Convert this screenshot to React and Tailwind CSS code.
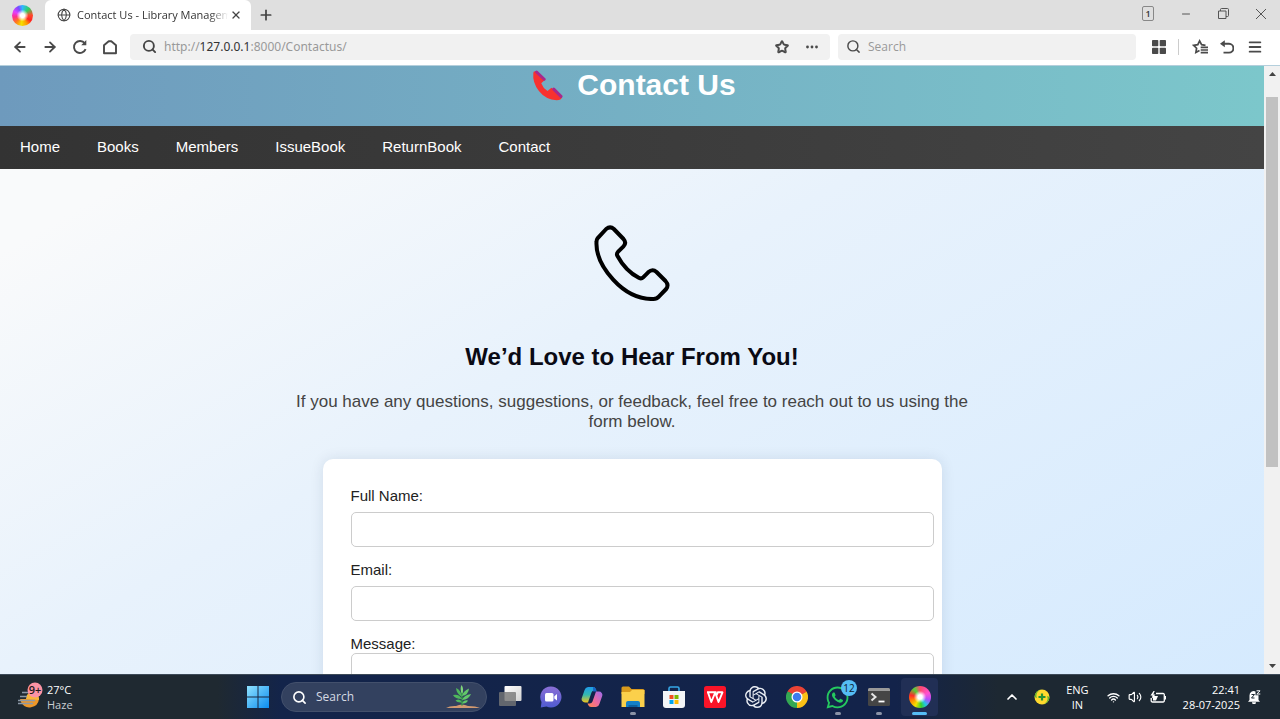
import React from "react";
import { ArrowLeft, ArrowRight, Globe, Search, Star, Plus, X, Minus, Menu, ChevronUp, Wifi, Volume2 } from "lucide-react";
import { SiOpenai } from "react-icons/si";
import { FaWhatsapp } from "react-icons/fa";

const WHEEL =
  "rounded-full bg-[radial-gradient(circle,#ffffff_14%,rgba(255,255,255,0)_40%),conic-gradient(#2fb8ff,#2fd060_12%,#ff4a2a_24%,#ff2222_34%,#ff9a00_42%,#f4e000_52%,#ff7a1a_62%,#ff2e8a_72%,#e040ff_82%,#7a4bff_92%,#2fb8ff)]";

const WHEEL_ALT =
  "rounded-full bg-[radial-gradient(circle,#ffffff_14%,rgba(255,255,255,0)_40%),conic-gradient(#ff4a6a,#ff4fd0_18%,#b04dff_30%,#20c8e0_40%,#35d02f_48%,#f4e000_58%,#ff8a00_68%,#ff2a2a_78%,#4fd23a_90%,#ff4a6a)]";

function TitleBar() {
  return (
    <div className="flex h-[30px] shrink-0 bg-[#dfdfdf]">
      <button aria-label="Browser menu" className="flex w-[45px] items-center justify-center">
        <span className={`size-[21px] ${WHEEL}`} />
      </button>
      <div className="flex w-[206px] items-center rounded-t-md bg-white pl-3 pr-[7px]">
        <Globe className="size-[14px] shrink-0 text-[#444]" strokeWidth={1.8} />
        <span className="ml-[6px] min-w-0 flex-1 overflow-hidden whitespace-nowrap text-[11px] text-[#333] [mask-image:linear-gradient(to_right,black_88%,transparent)]">
          Contact Us - Library Management
        </span>
        <button aria-label="Close tab" className="flex size-4 items-center justify-center">
          <X className="size-3 text-[#444]" strokeWidth={2.6} />
        </button>
      </div>
      <button aria-label="New tab" className="flex w-[30px] items-center justify-center">
        <Plus className="size-4 text-[#444]" strokeWidth={2.6} />
      </button>
      <div className="ml-auto flex items-center pb-[3px] pr-[14px] text-[#555]">
        <button aria-label="Tab count" className="mr-[26px] flex h-[15px] w-3 items-center justify-center rounded-xs border border-[#888] text-[9px] font-semibold text-[#333]">
          1
        </button>
        <button aria-label="Minimize" className="mr-[26px]">
          <Minus className="size-3" strokeWidth={2} />
        </button>
        <button aria-label="Restore" className="mr-[27px]">
          <svg className="size-[11px]" viewBox="0 0 11 11" fill="none" stroke="currentColor">
            <path d="M0.5 3h7.500v7.500H0.500zM2.500 3V1.500a1 1 0 0 1 1-1h6a1 1 0 0 1 1 1v6a1 1 0 0 1-1 1h-1.500" />
          </svg>
        </button>
        <button aria-label="Close window">
          <svg className="size-[10px]" viewBox="0 0 10 10" fill="none" stroke="currentColor">
            <path d="M0 0l10 10M10 0L0 10" />
          </svg>
        </button>
      </div>
    </div>
  );
}

function ToolBar() {
  return (
    <div className="flex h-9 shrink-0 items-center border-b border-[#b4cfdc] bg-white pb-[2px] text-[#4a4a4a]">
      <div className="flex w-[130px] items-center gap-[14px] pl-3">
        <button aria-label="Back"><ArrowLeft className="size-4" strokeWidth={2.7} /></button>
        <button aria-label="Forward"><ArrowRight className="size-4" strokeWidth={2.7} /></button>
        <button aria-label="Reload">
          <svg className="size-4" viewBox="0 0 16 16" fill="none" stroke="currentColor" strokeWidth="1.900">
            <path d="M13.600 10.200a6 6 0 1 1-.8-5.800" />
            <path d="M14.300 1v5.200H9.200z" fill="currentColor" stroke="none" />
          </svg>
        </button>
        <button aria-label="Home">
          <svg className="size-4" viewBox="0 0 16 16" fill="none" stroke="currentColor" strokeWidth="1.900" strokeLinejoin="round">
            <path d="M2 6.200L6.700 2.200h2.600L14 6.200v8H2z" />
          </svg>
        </button>
      </div>
      <div className="flex h-[26px] flex-[676] items-center rounded-sm bg-[#f1f1f1] px-3">
        <Search className="size-[15px] text-[#444]" strokeWidth={3} />
        <a href="http://127.0.0.1:8000/Contactus/" className="ml-[7px] font-['Noto_Sans',sans-serif] text-[12px] text-[#999]">
          http://<span className="text-[#333]">127.0.0.1</span>:8000/Contactus/
        </a>
        <button aria-label="Bookmark" className="ml-auto"><Star className="size-[14px]" strokeWidth={3.4} /></button>
        <button aria-label="More" className="ml-[17px]">
          <svg className="size-3" viewBox="0 0 12 12" fill="currentColor">
            <circle cx="1.500" cy="6" r="1.400" /><circle cx="6" cy="6" r="1.400" /><circle cx="10.500" cy="6" r="1.400" />
          </svg>
        </button>
      </div>
      <label className="ml-2 flex h-[26px] flex-[290] items-center rounded-sm bg-[#f1f1f1] pl-2">
        <Search className="size-[15px] shrink-0" strokeWidth={2.3} />
        <input aria-label="Search" placeholder="Search" className="ml-[7px] w-full min-w-0 bg-transparent text-[12px] outline-none placeholder:text-[#999]" />
      </label>
      <div className="flex w-[144px] items-center pl-4">
        <button aria-label="Apps">
          <svg className="size-[14px]" viewBox="0 0 14 14" fill="currentColor">
            <rect width="6.300" height="6.300" rx="0.800" /><rect x="7.700" width="6.300" height="6.300" rx="0.800" />
            <rect y="7.700" width="6.300" height="6.300" rx="0.800" /><rect x="7.700" y="7.700" width="6.300" height="6.300" rx="0.800" />
          </svg>
        </button>
        <span className="ml-3 h-4 w-px bg-[#ccc]" />
        <button aria-label="Favorites" className="ml-[13px]">
          <svg className="size-4" viewBox="0 0 16 16" fill="none" stroke="currentColor" strokeWidth="1.700">
            <path d="M13.500 6.300L9.600 5.700 7.600 1.900 5.800 5.700l-4.200.6 3 2.900-.7 4.300 3.600-2" />
            <path d="M8.700 8.300H16M8.700 11H16M8.700 13.700H16" />
          </svg>
        </button>
        <button aria-label="Undo close tab" className="ml-3">
          <svg className="size-[14px]" viewBox="0 0 14 14" fill="none" stroke="currentColor" strokeWidth="1.900">
            <path d="M2 3.800h7a4.200 4.200 0 0 1 0 8.800H3.500" /><path d="M4.800.3L0 3.800l4.800 3.400z" fill="currentColor" stroke="none" />
          </svg>
        </button>
        <button aria-label="Menu" className="ml-[13px]"><Menu className="size-4" strokeWidth={2.8} /></button>
      </div>
    </div>
  );
}

function PageHeader() {
  return (
    <header className="flex h-[60px] items-start justify-center gap-[14px] bg-linear-to-r from-[#6e9abd] to-[#7cc7cb] pl-1 pt-[2px]">
      <svg className="mt-[2px] size-[31px]" viewBox="100 28 92 94" aria-hidden="true">
        <path d="M103 38Q102 30 112 32L138 58L127 68Q132 82 146 92L158 82L190 110Q188 120 174 120Q140 118 120 92Q100 66 103 38Z" fill="#f8312f" />
        <path d="M113 34l23 22M165 86l22 22" stroke="#a8288c" strokeWidth="9" strokeLinecap="round" />
      </svg>
      <h1 className="text-[30px] leading-[34px] font-bold text-white">Contact Us</h1>
    </header>
  );
}

const LINKS = ["Home", "Books", "Members", "IssueBook", "ReturnBook", "Contact"];

function PageNav() {
  return (
    <nav className="flex h-[43px] items-center gap-[37px] bg-linear-to-r from-[#333] to-[#444] pl-5 text-[15px] text-white">
      {LINKS.map((l) => (
        <a key={l} href="#">{l}</a>
      ))}
    </nav>
  );
}

const FIELD = "block w-[calc(100%+20px)] rounded-[5px] border border-[#ccc] bg-white px-2 outline-none";

function ContactPage() {
  return (
    <div className="flex min-h-0 flex-1">
      <div className="min-w-0 flex-1 overflow-hidden bg-[linear-gradient(150deg,#f9fafb_14%,#e8f2fc_45%,#d5eafe)] font-['Liberation_Sans',Arial,sans-serif]">
        <PageHeader />
        <PageNav />
        <main className="flex flex-col items-center pt-14">
          <svg className="size-[76px]" viewBox="104 44 227 228" fill="none" stroke="#000" strokeWidth="12" strokeLinejoin="round" aria-hidden="true">
            <path d="M114 84L140 56Q152 46 163 56L192 86Q202 98 192 108L176 124Q170 130 174 137Q198 182 239 203Q246 206 251 201L266 186Q279 174 291 185L318 212Q329 224 320 236L298 259Q292 266 282 266Q216 268 161 208Q108 150 111 94Q111 88 114 84Z" />
          </svg>
          <h2 className="mt-[42px] text-[24px] leading-7 font-bold text-[#0a0a14]">We’d Love to Hear From You!</h2>
          <p className="mt-[21px] w-[675px] max-w-full text-center text-[17px] leading-5 text-[#444]">
            If you have any questions, suggestions, or feedback, feel free to reach out to us using the form below.
          </p>
          <form className="mt-[27px] w-[619px] max-w-full rounded-[10px] bg-white p-7 text-[15px] leading-[18px] text-[#222] shadow-[0_0_14px_rgba(0,40,70,0.1)]">
            <label htmlFor="name" className="block">Full Name:</label>
            <input id="name" type="text" className={`mt-[7px] h-[35px] ${FIELD}`} />
            <label htmlFor="email" className="mt-[14px] block">Email:</label>
            <input id="email" type="email" className={`mt-[7px] h-[35px] ${FIELD}`} />
            <label htmlFor="message" className="mt-[14px] block">Message:</label>
            <textarea id="message" rows={5} className={`resize-none ${FIELD}`} />
          </form>
        </main>
      </div>
      <div className="flex w-4 shrink-0 flex-col items-center bg-[#f1f1f1] py-[6px]">
        <svg className="h-1 w-[7px]" viewBox="0 0 7 4"><path d="M0 4L3.500 0 7 4z" fill="#444" /></svg>
        <div className="mt-[21px] h-[370px] w-3 bg-[#c1c1c1]" />
        <svg className="mt-auto h-1 w-[7px]" viewBox="0 0 7 4"><path d="M0 0h7L3.500 4z" fill="#444" /></svg>
      </div>
    </div>
  );
}

function WindowsIcon() {
  return (
    <svg className="size-[22px]" viewBox="0 0 22 22">
      <defs>
        <linearGradient id="win" x1="0" y1="0" x2="1" y2="1"><stop stopColor="#8fe2ff" /><stop offset="1" stopColor="#0b8cf0" /></linearGradient>
      </defs>
      <path d="M0 0h10.500v10.500H0zM11.500 0H22v10.500H11.500zM0 11.500h10.500V22H0zM11.500 11.500H22V22H11.500z" fill="url(#win)" />
    </svg>
  );
}

function PlantIcon() {
  return (
    <svg className="h-6 w-[34px]" viewBox="0 0 34 24">
      <path d="M0 23Q4 20.600 10 21Q16 18 22 21Q30 21 34 23z" fill="#d39a70" />
      <path d="M16 20.500V6" stroke="#2f8f46" strokeWidth="1.500" />
      <path d="M16 9Q13.500 4 15.500 0Q18.500 4 16 9z" fill="#7fd67a" />
      <path d="M16 12Q10.500 9 10 3Q15 5 16 12zM16 14Q9 14 7 10Q13 8.500 16 14zM16 17.500Q11 18 9.500 15.500Q14 13 16 17.500z" fill="#4fb85c" />
      <path d="M16 11Q17 6 23 3.500Q22.500 10 16 11zM16 15Q18 10 25 9Q23 14.500 16 15zM16 18.500Q18 14.500 22 15.500Q20.500 19 16 18.500z" fill="#62c76a" />
    </svg>
  );
}

function TaskViewIcon() {
  return (
    <svg className="size-6" viewBox="0 0 24 24">
      <defs><linearGradient id="tv" x1="0" y1="0" x2="1" y2="1"><stop stopColor="#fff" /><stop offset="1" stopColor="#d2d2d2" /></linearGradient></defs>
      <rect x="6.500" y="1" width="17" height="15" rx="1" fill="url(#tv)" />
      <rect x="1" y="7" width="17" height="14" rx="1" fill="#777" fillOpacity="0.8" />
    </svg>
  );
}

function ChatIcon() {
  return (
    <svg className="size-[22px]" viewBox="0 0 22 22">
      <defs><linearGradient id="chat" x1="0" y1="0" x2="0" y2="1"><stop stopColor="#8b6fd6" /><stop offset="1" stopColor="#4f5bd0" /></linearGradient></defs>
      <path d="M11 .5A10.500 10.500 0 1 1 6.500 20.500L.8 21.500 1.500 16A10.500 10.500 0 0 1 11 .5z" fill="url(#chat)" />
      <rect x="5" y="7" width="8.500" height="8.500" rx="1.500" fill="#fff" />
      <path d="M14.300 10.200L17 8v6.500l-2.700-2z" fill="#fff" />
    </svg>
  );
}

function CopilotIcon() {
  return (
    <svg className="size-[22px]" viewBox="0 0 22 22">
      <defs>
        <linearGradient id="cpa" x1="0" y1="0" x2="0" y2="1"><stop stopColor="#1f9bea" /><stop offset="0.5" stopColor="#33b8b0" /><stop offset="1" stopColor="#f0c41c" /></linearGradient>
        <linearGradient id="cpb" x1="1" y1="0" x2="0" y2="1"><stop stopColor="#9b6cf0" /><stop offset="0.55" stopColor="#ee6a9c" /><stop offset="1" stopColor="#ff8a48" /></linearGradient>
      </defs>
      <path d="M15.500 4.500L14.800 3A3 3 0 0 0 12 1H7A4 4 0 0 0 3.600 4L.8 12A3.400 3.400 0 0 0 4 16.500h3L10.500 6.500A3 3 0 0 1 13.300 4.500z" fill="url(#cpa)" />
      <path d="M12 1a3 3 0 0 1 2.800 2l.9 2.400h-3.500z" fill="#1763c6" />
      <path d="M6.500 17.500L7.200 19A3 3 0 0 0 10 21h5a4 4 0 0 0 3.400-3l2.800-8A3.400 3.400 0 0 0 18 5.500h-3l-3.500 10a3 3 0 0 1-2.800 2z" fill="url(#cpb)" />
    </svg>
  );
}

function FolderIcon() {
  return (
    <svg className="h-[22px] w-6" viewBox="0 0 24 22">
      <path d="M.5 2A1.500 1.500 0 0 1 2 .5h6L10.500 3H22A1.500 1.500 0 0 1 23.500 4.500V8H.5z" fill="#d99a1c" />
      <path d="M.5 6h8.500L11 4h12.500v17H.5z" fill="#fbd04b" />
      <path d="M5 21v-4a2 2 0 0 1 2-2h10a2 2 0 0 1 2 2v4z" fill="#1580c8" />
      <path d="M7.500 19h9v2h-9z" fill="#0d5f9e" />
    </svg>
  );
}

function StoreIcon() {
  return (
    <svg className="size-[22px]" viewBox="0 0 22 22">
      <path d="M6 6V2.500A1.500 1.500 0 0 1 7.500 1h7A1.500 1.500 0 0 1 16 2.500V6" fill="none" stroke="#36a7e6" strokeWidth="1.600" />
      <path d="M0 5h22v14a3 3 0 0 1-3 3H3a3 3 0 0 1-3-3z" fill="#f3f5f7" />
      <path d="M6.500 9h4v4h-4z" fill="#f25022" /><path d="M11.500 9h4v4h-4z" fill="#7fba00" />
      <path d="M6.500 14h4v4h-4z" fill="#00a4ef" /><path d="M11.500 14h4v4h-4z" fill="#ffb900" />
    </svg>
  );
}

function OfficeIcon() {
  return (
    <svg className="size-[22px]" viewBox="0 0 22 22">
      <rect width="22" height="22" rx="2.500" fill="#fa1428" />
      <path d="M3 6.300h9.500M4 6.500l3.300 9.500 3.900-9.500 3.300 9.500 4-9.700h-4.700l-1.300 3" fill="none" stroke="#fff" strokeWidth="1.900" strokeLinejoin="round" />
    </svg>
  );
}

function ChromeIcon() {
  return (
    <svg className="size-[22px]" viewBox="0 0 48 48">
      <path d="M24 24L3.200 12A24 24 0 0 1 44.800 12z" fill="#ea4335" />
      <path d="M24 24L44.800 12A24 24 0 0 1 24 48z" fill="#fbc116" />
      <path d="M24 24V48A24 24 0 0 1 3.200 12z" fill="#34a853" />
      <path d="M24 12h20.800L34.400 18z" fill="#ea4335" />
      <path d="M34.400 30L24 48 24 34z" fill="#fbc116" />
      <path d="M13.600 30L3.200 12l12 6z" fill="#34a853" />
      <circle cx="24" cy="24" r="12" fill="#fff" /><circle cx="24" cy="24" r="9.300" fill="#3b7cf0" />
    </svg>
  );
}

function TerminalIcon() {
  return (
    <svg className="h-[18px] w-[22px]" viewBox="0 0 22 18">
      <rect width="22" height="18" rx="1.500" fill="#454545" /><path d="M0 1.500A1.500 1.500 0 0 1 1.500 0h19A1.500 1.500 0 0 1 22 1.500V3H0z" fill="#999" />
      <path d="M3.500 5.500l4 3.500-4 3.500" fill="none" stroke="#e5e5e5" strokeWidth="2" /><path d="M10.500 13.500h6" stroke="#fff" strokeWidth="1.800" />
    </svg>
  );
}

const APPS = [
  { name: "Task view", icon: <TaskViewIcon /> },
  { name: "Chat", icon: <ChatIcon /> },
  { name: "Copilot", icon: <CopilotIcon /> },
  { name: "File Explorer", icon: <FolderIcon />, open: true },
  { name: "Store", icon: <StoreIcon /> },
  { name: "Office", icon: <OfficeIcon /> },
  { name: "ChatGPT", icon: <SiOpenai className="size-[22px] text-[#e8ecf2]" /> },
  { name: "Chrome", icon: <ChromeIcon /> },
  { name: "WhatsApp", icon: <FaWhatsapp className="size-[25px] text-[#25c95f]" />, open: true, badge: "12" },
  { name: "Terminal", icon: <TerminalIcon />, open: true },
  { name: "Browser", icon: <span className={`size-[22px] ${WHEEL_ALT}`} />, active: true },
];

function TaskBar() {
  return (
    <div className="flex h-[45px] shrink-0 items-center border-t border-[#3d4a58] bg-[linear-gradient(to_right,#1f2931_17%,#13244a_22%,#13234a_70%,#1d2832_78%)] text-white">
      <button className="flex w-[237px] items-center gap-1 pl-[17px] text-left">
        <svg className="h-[30px] w-[26px]" viewBox="0 0 26 30" aria-hidden="true">
          <path d="M3 17h19a9.500 9.500 0 0 1-18 3z" fill="#ee9728" /><path d="M9 17a6.500 6.500 0 0 1 13-1v2z" fill="#f8b53a" />
          <path d="M5 10.500h7M3 14.500h7M1 18.500h17M1 21.500h15" stroke="#8b98a6" strokeWidth="1.300" />
          <circle cx="18" cy="8" r="7.500" fill="#fb93a4" />
          <text x="18" y="12" textAnchor="middle" fontSize="11" fontWeight="600" fill="#1b1b1b">9+</text>
        </svg>
        <span className="flex flex-col text-[11px] leading-[15px]">
          <span>27°C</span><span className="text-[#c9ced3]">Haze</span>
        </span>
      </button>
      <button aria-label="Start" className="flex w-[41px] justify-center"><WindowsIcon /></button>
      <label className="ml-[3px] mr-[2px] flex h-[30px] w-[206px] items-center rounded-full border border-[#43506c] bg-[#33415f] pl-[10px] pr-[6px]">
        <Search className="size-[15px] shrink-0" strokeWidth={2.6} />
        <input aria-label="Search Windows" placeholder="Search" className="ml-[9px] w-full min-w-0 bg-transparent text-[12px] outline-none placeholder:text-[#d5dae3]" />
        <span className="shrink-0"><PlantIcon /></span>
      </label>
      {APPS.map((a) => (
        <button
          key={a.name}
          aria-label={a.name}
          className={`relative mx-[2px] flex h-[38px] w-[37px] shrink-0 items-center justify-center rounded-sm ${a.active ? "bg-[#212f55]" : ""}`}
        >
          {a.icon}
          {a.badge && (
            <span className="absolute top-[2px] -right-px flex size-4 items-center justify-center rounded-full bg-[#55bdf5] text-[10px] leading-none text-[#10202e]">{a.badge}</span>
          )}
          {a.open && <span className="absolute bottom-[1px] left-4 h-[3px] w-[6px] rounded-full bg-[#8b93a7]" />}
          {a.active && <span className="absolute bottom-[1px] left-[11px] h-[3px] w-[15px] rounded-full bg-[#56bdf6]" />}
        </button>
      ))}
      <div className="ml-auto flex shrink-0 items-center pr-[19px]">
        <button aria-label="Show hidden icons"><ChevronUp className="size-4" strokeWidth={2.6} /></button>
        <button aria-label="Security" className="ml-[14px]">
          <svg className="size-4" viewBox="0 0 16 16">
            <circle cx="8" cy="8" r="7.500" fill="#ffd92e" /><path d="M8 .5A7.500 7.500 0 0 0 .5 8L3 9A6 6 0 0 1 8 .5zM8 15.500A7.500 7.500 0 0 0 15.500 8L13 7a6 6 0 0 1-5 8.500z" fill="#65b52c" />
            <path d="M8 4.500v7M4.500 8h7" stroke="#279234" strokeWidth="2.200" />
          </svg>
        </button>
        <button className="ml-4 text-center text-[11px] leading-[15px]">ENG<br />IN</button>
        <button aria-label="Network, sound and battery" className="ml-[18px] flex items-center gap-2">
          <Wifi className="size-[13px]" strokeWidth={2.6} />
          <Volume2 className="size-[14px]" strokeWidth={2} />
          <svg className="h-3 w-4" viewBox="0 0 16 12" fill="none" stroke="#fff" strokeWidth="1.300">
            <path d="M6 2.500h7A1.300 1.300 0 0 1 14.300 4v5.500A1.300 1.300 0 0 1 13 11H2.500A1.300 1.300 0 0 1 1.200 9.500V7" />
            <path d="M3 5h5L6 9.500H3z" fill="#fff" stroke="none" /><path d="M15.500 5v3.500" /><path d="M3.500 0L.5 4.500h2L1.500 8 5.500 3.500H3.300L4.700 0z" fill="#fff" stroke="none" />
          </svg>
        </button>
        <button className="ml-[17px] text-right text-[11px] leading-[15px]">22:41<br />28-07-2025</button>
        <button aria-label="Notifications" className="ml-[7px]">
          <svg className="size-[14px]" viewBox="0 0 14 14">
            <path d="M2.500 10V5.500a4.300 4.300 0 0 1 6-4v3.800h3V10l1.500 1.700H1zM5 12.300h4a2 2 0 0 1-4 0z" fill="#fff" />
            <path d="M4.500 4.500h3L4.500 8h3" fill="none" stroke="#1d2832" /><path d="M9.500.8h3.600L9.800 4h3.500" fill="none" stroke="#fff" />
          </svg>
        </button>
      </div>
    </div>
  );
}

export default function App() {
  return (
    <div className="flex h-screen flex-col overflow-hidden font-['Open_Sans','Noto_Sans',sans-serif]">
      <TitleBar />
      <ToolBar />
      <ContactPage />
      <TaskBar />
    </div>
  );
}
